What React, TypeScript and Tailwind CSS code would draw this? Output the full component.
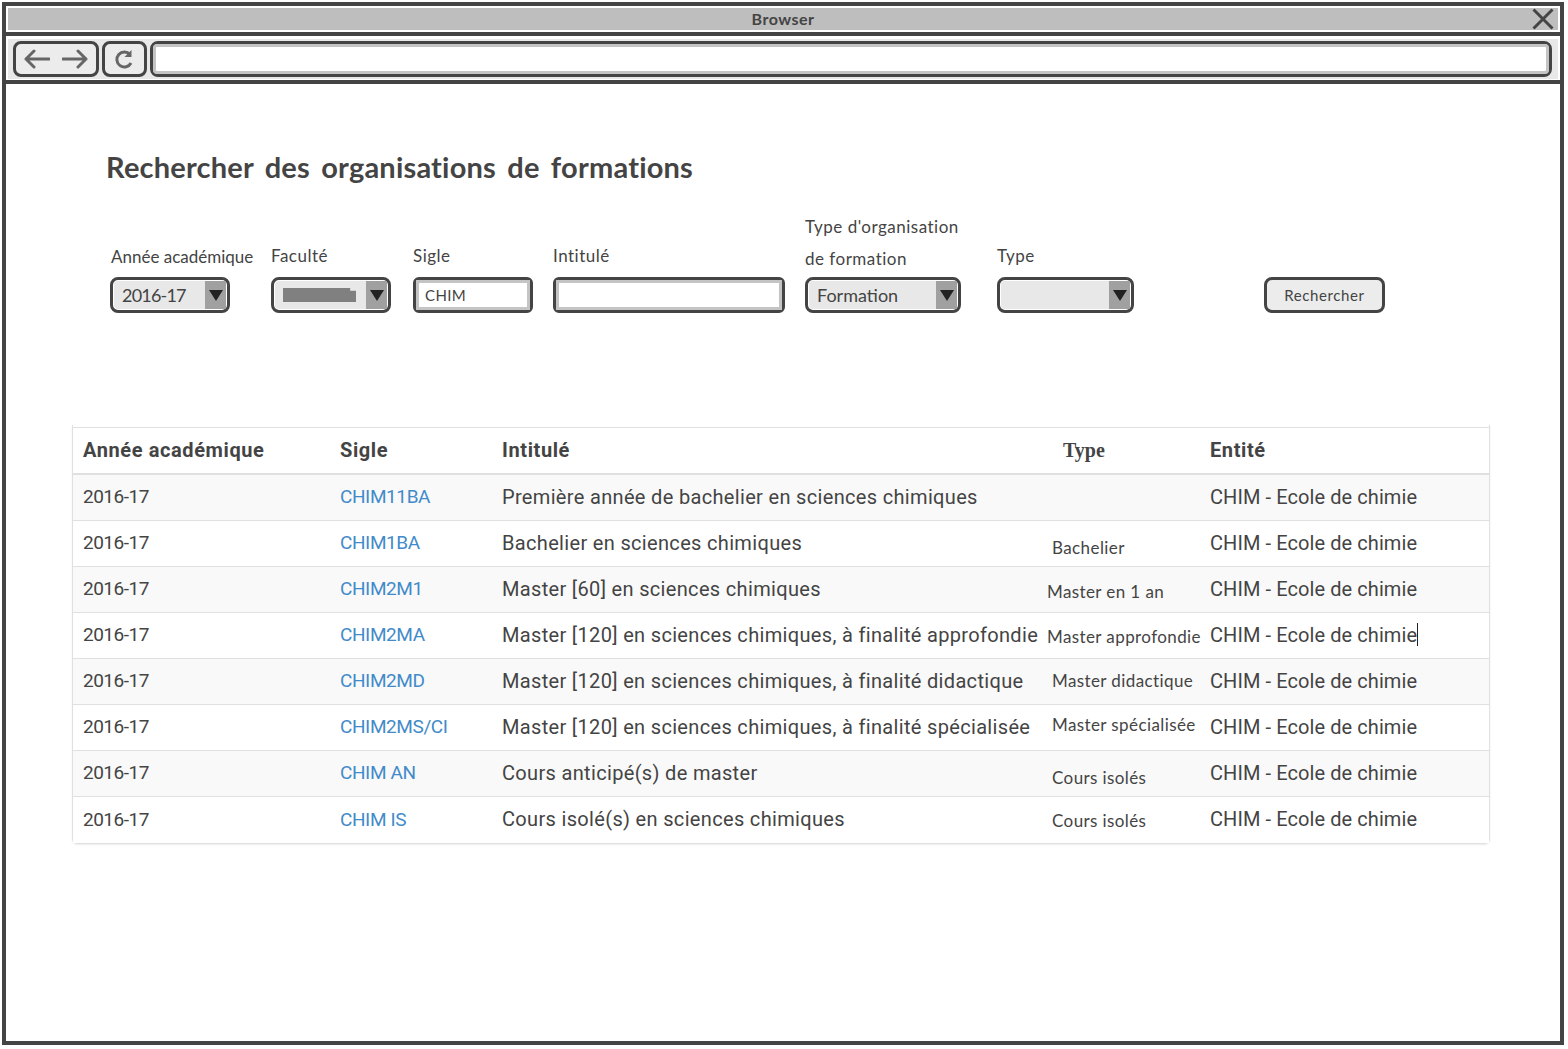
const labelFont = "font-['Lato','Noto_Sans',sans-serif]";

const rows = [
  { sigle: "CHIM11BA", title: "Première année de bachelier en sciences chimiques", type: "", typeCls: "pl-[12px]", bg: "bg-[#f9f9f9]" },
  { sigle: "CHIM1BA", title: "Bachelier en sciences chimiques", type: "Bachelier", typeCls: "pl-[12px] pt-[10px]", bg: "bg-white" },
  { sigle: "CHIM2M1", title: "Master [60] en sciences chimiques", type: "Master en 1 an", typeCls: "pl-[7px] pt-[6px]", bg: "bg-[#f9f9f9]" },
  { sigle: "CHIM2MA", title: "Master [120] en sciences chimiques, à finalité approfondie", type: "Master approfondie", typeCls: "pl-[7px] pt-[4px]", bg: "bg-white" },
  { sigle: "CHIM2MD", title: "Master [120] en sciences chimiques, à finalité didactique", type: "Master didactique", typeCls: "pl-[12px]", bg: "bg-[#f9f9f9]" },
  { sigle: "CHIM2MS/CI", title: "Master [120] en sciences chimiques, à finalité spécialisée", type: "Master spécialisée", typeCls: "pl-[12px] pb-[4px]", bg: "bg-white" },
  { sigle: "CHIM AN", title: "Cours anticipé(s) de master", type: "Cours isolés", typeCls: "pl-[12px] pt-[10px]", bg: "bg-[#f9f9f9]" },
  { sigle: "CHIM IS", title: "Cours isolé(s) en sciences chimiques", type: "Cours isolés", typeCls: "pl-[12px] pt-[4px]", bg: "bg-white" },
];

function SelectBox({ width, children }: { width: string; children?: React.ReactNode }) {
  return (
    <div className={`${width} h-[36px] rounded-[8px] border-[3px] border-[#444] bg-white py-[1px] pl-[1px] pr-[1px] flex`}>
      <div className="flex-1 bg-[#e8e8e8] flex items-center pl-[8px] text-[18px] text-[#444] rounded-l-[4px] overflow-hidden">
        {children}
      </div>
      <div className="w-[21px] bg-[#a0a0a0] flex items-center justify-center">
        <svg width="14" height="11" viewBox="0 0 14 11">
          <path d="M0 0h14L7 11z" fill="#222" />
        </svg>
      </div>
    </div>
  );
}

function Field({ label, children }: { label: React.ReactNode; children: React.ReactNode }) {
  return (
    <div className="flex flex-col">
      <div className="text-[17px] tracking-[0.5px] text-[#444] leading-[22px] pb-[10px]">{label}</div>
      {children}
    </div>
  );
}

export default function App() {
  return (
    <div className="h-screen w-full bg-white pl-[2px] pr-[4px] pt-[2px] pb-[4px]">
      <div className={`h-full border-[4px] border-[#444] flex flex-col ${labelFont}`}>
        {/* title bar */}
        <div className="border-b-[4px] border-[#444] p-[2px]">
          <div className="h-[22px] bg-[#bebebe] flex items-center justify-center relative text-[16px] font-bold tracking-[0.5px] text-[#444]">
            Browser
            <svg className="absolute right-[3px] top-0" width="24" height="22" viewBox="0 0 24 22">
              <path d="M2.5 1.5 21.5 20.5M21.5 1.5 2.5 20.5" stroke="#444" strokeWidth="3" fill="none" />
            </svg>
          </div>
        </div>
        {/* toolbar */}
        <div className="border-b-[4px] border-[#444] px-[2px] pt-[3px] pb-[1px]">
          <div className="h-[40px] bg-[#e8e8e8] flex items-center gap-[3px] pl-[6px] pr-[6px]">
            <div className="w-[86px] h-[36px] -ml-px rounded-[8px] border-[3px] border-[#444] bg-[#ececec] flex items-center justify-center gap-[12px]">
              <svg width="26" height="20" viewBox="0 0 26 20">
                <path d="M25 10H2M10 2 2 10l8 8" stroke="#666" strokeWidth="3" fill="none" strokeLinecap="round" strokeLinejoin="round" />
              </svg>
              <svg width="26" height="20" viewBox="0 0 26 20">
                <path d="M1 10h23M16 2l8 8-8 8" stroke="#666" strokeWidth="3" fill="none" strokeLinecap="round" strokeLinejoin="round" />
              </svg>
            </div>
            <div className="w-[45px] h-[36px] rounded-[8px] border-[3px] border-[#444] bg-[#ececec] flex items-center justify-center pr-[2px]">
              <svg width="20" height="22" viewBox="0 0 20 22">
                <path d="M16 6.5A7.5 7.5 0 1 0 17 15" stroke="#666" strokeWidth="3" fill="none" />
                <path d="M17.5 2v7h-7z" fill="#666" />
              </svg>
            </div>
            <div className="flex-1 h-[36px] rounded-[8px] border-[3px] border-[#444] bg-white">
              <div className="h-full border-[3px] border-[#c4c4c4] rounded-[4px] bg-white" />
            </div>
          </div>
        </div>

        {/* content */}
        <div className="flex-1 pl-[66px]">
          <h1 className="pl-[34px] pt-[64px] text-[29px] leading-[38px] font-bold tracking-[0.2px] text-[#444] [word-spacing:4px]">
            Rechercher des organisations de formations
          </h1>

          <div className="flex items-end pl-[38px] pt-[25px]">
            <div className="w-[120px] mr-[41px] flex flex-col">
              <div className="text-[17px] text-[#444] leading-[22px] pb-[9px] pl-[1px] whitespace-nowrap">Année académique</div>
              <SelectBox width="w-[120px]">
                <span className="tracking-[-0.8px]">2016-17</span>
              </SelectBox>
            </div>
            <div className="mr-[22px]">
              <Field label="Faculté">
                <SelectBox width="w-[120px]">
                  <div className="w-[73px] h-[14px] bg-[#808080] [clip-path:polygon(0_0,92%_0,92%_20%,100%_20%,100%_100%,0_100%)]" />
                </SelectBox>
              </Field>
            </div>
            <div className="mr-[20px]">
              <Field label="Sigle">
                <div className="w-[120px] h-[36px] rounded-[6px] border-[3px] border-[#444]">
                  <div className="h-full border-[3px] border-[#c4c4c4] flex items-center pl-[6px] text-[15px] tracking-[0.4px] text-[#444]">CHIM</div>
                </div>
              </Field>
            </div>
            <div className="mr-[20px]">
              <Field label="Intitulé">
                <div className="w-[232px] h-[36px] rounded-[6px] border-[3px] border-[#444]">
                  <div className="h-full border-[3px] border-[#c4c4c4]" />
                </div>
              </Field>
            </div>
            <div className="mr-[36px]">
              <div className="text-[17px] tracking-[0.5px] text-[#444] leading-[32px] pb-[2px]">
                Type d'organisation
                <br />
                de formation
              </div>
              <SelectBox width="w-[156px]">Formation</SelectBox>
            </div>
            <div className="mr-[130px]">
              <Field label="Type">
                <SelectBox width="w-[137px]" />
              </Field>
            </div>
            <button className="w-[121px] h-[36px] rounded-[8px] border-[3px] border-[#444] bg-[#ececec] text-[15px] tracking-[0.6px] text-[#444]">
              Rechercher
            </button>
          </div>

          {/* results table */}
          <div className="mt-[112px] w-[1418px] border-x border-b border-[#e0e0e0] rounded-b-[5px] shadow-[0_1px_2px_rgba(0,0,0,0.08)] pt-[2px] text-[20px] text-[#444] font-['Roboto',sans-serif] tracking-[0.33px]">
            <div className="h-[48px] pb-[2px] flex items-center border-t border-b-2 border-[#e0e0e0] font-bold tracking-[0.6px]">
              <div className="w-[257px] pl-[10px]">Année académique</div>
              <div className="w-[162px] pl-[10px]">Sigle</div>
              <div className="w-[571px] pl-[10px]">Intitulé</div>
              <div className="w-[137px] font-['Liberation_Serif',serif] font-bold tracking-normal">Type</div>
              <div className="pl-[10px]">Entité</div>
            </div>
            {rows.map((r, i) => (
              <div key={r.sigle} className={`h-[46px] pb-[2px] flex items-center ${r.bg} ${i < 7 ? "border-b border-[#e0e0e0]" : ""}`}>
                <div className="w-[257px] pl-[10px] pt-[2px] text-[19px] tracking-[-0.5px]">2016-17</div>
                <div className="w-[162px] pl-[10px] pt-[2px] text-[19px] tracking-[-0.4px] text-[#428bca]">{r.sigle}</div>
                <div className="w-[548px] pl-[10px] whitespace-nowrap">{r.title}</div>
                <div className={`w-[160px] text-[17px] tracking-[0.4px] whitespace-nowrap ${labelFont} ${r.typeCls}`}>{r.type}</div>
                <div className="pl-[10px] flex items-center whitespace-nowrap tracking-[0.08px]">
                  CHIM - Ecole de chimie
                  {i === 3 && <span className="inline-block w-px h-[23px] bg-[#222]" />}
                </div>
              </div>
            ))}
          </div>
        </div>
      </div>
    </div>
  );
}
